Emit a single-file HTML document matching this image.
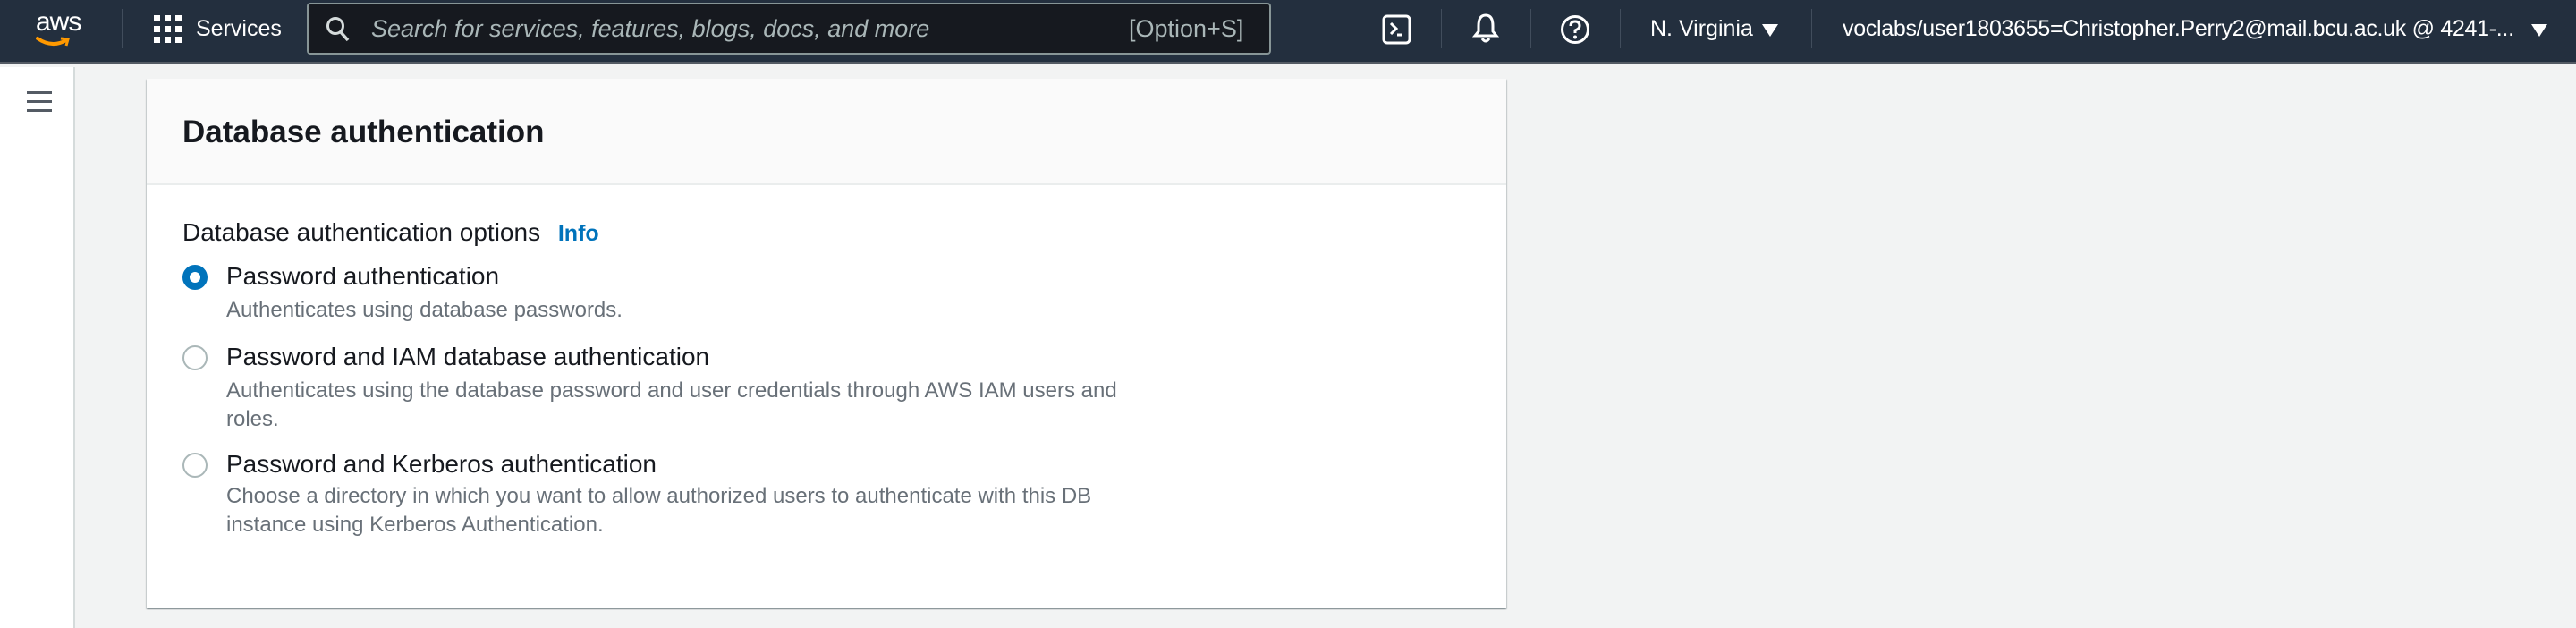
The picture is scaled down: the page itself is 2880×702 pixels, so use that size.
<!DOCTYPE html>
<html><head><meta charset="utf-8"><style>
*{margin:0;padding:0;box-sizing:border-box}
body{width:2880px;height:702px;background:#f2f3f3;font-family:"Liberation Sans",sans-serif;position:relative;overflow:hidden}
.top{position:absolute;left:0;top:0;width:2880px;height:72px;background:#232f3e;border-bottom:3px solid #545b64}
.abs{position:absolute}
.w{color:#fff;font-size:25px;white-space:nowrap}
.div{position:absolute;top:10px;width:1px;height:44px;background:#414d5c}
.side{position:absolute;left:0;top:75px;width:84px;height:627px;background:#fff;border-right:2px solid #d5dbdb}
.card{position:absolute;left:164px;top:88px;width:1520px;height:592px;background:#fff;box-shadow:0 1px 1px 0 rgba(0,28,36,.3),1px 1px 1px 0 rgba(0,28,36,.15),-1px 1px 1px 0 rgba(0,28,36,.15)}
.ch{position:absolute;left:0;top:0;width:100%;height:119px;background:#fafafa;border-bottom:2px solid #eaeded}
.t{position:absolute;white-space:nowrap}
.lab{font-size:28px;color:#16191f}
.desc{font-size:24px;color:#687078;line-height:32px}
.radio{position:absolute;width:28px;height:28px;border-radius:50%;border:2px solid #aab7b8;background:#fff}
</style></head><body>
<div class="top">
  <div class="abs w" style="left:40px;top:8px;font-size:30px;letter-spacing:-1px">aws</div>
  <svg class="abs" style="left:40px;top:40px" width="40" height="16" viewBox="0 0 40 16"><path d="M2 3 Q18 14 34 5" stroke="#ff9900" stroke-width="4" fill="none" stroke-linecap="round"/><path d="M28 3 L36 4 L34 11" stroke="#ff9900" stroke-width="3" fill="none"/></svg>
  <div class="div" style="left:136px"></div>
  <svg class="abs" style="left:172px;top:17px" width="32" height="32" viewBox="0 0 32 32" fill="#fff">
    <rect x="0" y="0" width="7" height="7"/><rect x="12" y="0" width="7" height="7"/><rect x="24" y="0" width="7" height="7"/>
    <rect x="0" y="12" width="7" height="7"/><rect x="12" y="12" width="7" height="7"/><rect x="24" y="12" width="7" height="7"/>
    <rect x="0" y="24" width="7" height="7"/><rect x="12" y="24" width="7" height="7"/><rect x="24" y="24" width="7" height="7"/></svg>
  <div class="abs w" style="left:219px;top:18px">Services</div>
  <div class="abs" style="left:343px;top:3px;width:1078px;height:58px;background:#16191f;border:2px solid #879596;border-radius:4px"></div>
  <svg class="abs" style="left:364px;top:18px" width="28" height="30" viewBox="0 0 28 30"><circle cx="11" cy="11" r="8.5" stroke="#d5dbdb" stroke-width="3" fill="none"/><path d="M17 18 L25 27" stroke="#d5dbdb" stroke-width="3.5"/></svg>
  <div class="abs" style="left:415px;top:17px;font-size:27px;font-style:italic;color:#aab7b8;white-space:nowrap">Search for services, features, blogs, docs, and more</div>
  <div class="abs" style="left:1262px;top:17px;font-size:27px;color:#aab7b8;white-space:nowrap">[Option+S]</div>
  <svg class="abs" style="left:1545px;top:16px" width="34" height="34" viewBox="0 0 34 34"><rect x="2" y="2" width="29" height="30" rx="4" stroke="#fff" stroke-width="3" fill="none"/><path d="M10 10 L16 16 L10 22" stroke="#fff" stroke-width="3" fill="none"/><path d="M17 23 L22 23" stroke="#fff" stroke-width="3"/></svg>
  <div class="div" style="left:1611px"></div>
  <svg class="abs" style="left:1646px;top:14px" width="30" height="36" viewBox="0 0 30 36"><path d="M15 3 C8 3 7 10 7 15 L7 21 L3 26 L27 26 L23 21 L23 15 C23 10 22 3 15 3 Z" stroke="#fff" stroke-width="3" fill="none"/><path d="M11 29 Q15 35 19 29" stroke="#fff" stroke-width="3" fill="none"/></svg>
  <div class="div" style="left:1711px"></div>
  <svg class="abs" style="left:1744px;top:16px" width="34" height="34" viewBox="0 0 34 34"><circle cx="17" cy="17" r="14.5" stroke="#fff" stroke-width="3" fill="none"/><path d="M12 13 Q12 8 17 8 Q22 8 22 13 Q22 16 17 18 L17 21" stroke="#fff" stroke-width="3" fill="none"/><circle cx="17" cy="25.5" r="2" fill="#fff"/></svg>
  <div class="div" style="left:1811px"></div>
  <div class="abs w" style="left:1845px;top:18px">N. Virginia</div>
  <svg class="abs" style="left:1970px;top:27px" width="18" height="14"><path d="M0 0 L18 0 L9 14 Z" fill="#fff"/></svg>
  <div class="div" style="left:2025px"></div>
  <div class="abs w" style="left:2060px;top:18px;letter-spacing:-0.3px">voclabs/user1803655=Christopher.Perry2@mail.bcu.ac.uk @ 4241-...</div>
  <svg class="abs" style="left:2830px;top:27px" width="18" height="14"><path d="M0 0 L18 0 L9 14 Z" fill="#fff"/></svg>
</div>
<div class="side">
  <div class="abs" style="left:30px;top:27px;width:28px;height:3px;background:#545b64"></div>
  <div class="abs" style="left:30px;top:37px;width:28px;height:3px;background:#545b64"></div>
  <div class="abs" style="left:30px;top:47px;width:28px;height:3px;background:#545b64"></div>
</div>
<div class="card">
  <div class="ch"><div class="t" style="left:40px;top:40px;font-size:35px;font-weight:bold;color:#16191f">Database authentication</div></div>
  <div class="t lab" style="left:40px;top:156px">Database authentication options <span style="color:#0073bb;font-weight:bold;font-size:25px;margin-left:12px">Info</span></div>
  <div class="radio" style="left:40px;top:208px;border:8px solid #0073bb"></div>
  <div class="t lab" style="left:89px;top:205px">Password authentication</div>
  <div class="t desc" style="left:89px;top:243px">Authenticates using database passwords.</div>
  <div class="radio" style="left:40px;top:298px"></div>
  <div class="t lab" style="left:89px;top:295px">Password and IAM database authentication</div>
  <div class="t desc" style="left:89px;top:333px">Authenticates using the database password and user credentials through AWS IAM users and<br>roles.</div>
  <div class="radio" style="left:40px;top:418px"></div>
  <div class="t lab" style="left:89px;top:415px">Password and Kerberos authentication</div>
  <div class="t desc" style="left:89px;top:451px">Choose a directory in which you want to allow authorized users to authenticate with this DB<br>instance using Kerberos Authentication.</div>
</div>
</body></html>
